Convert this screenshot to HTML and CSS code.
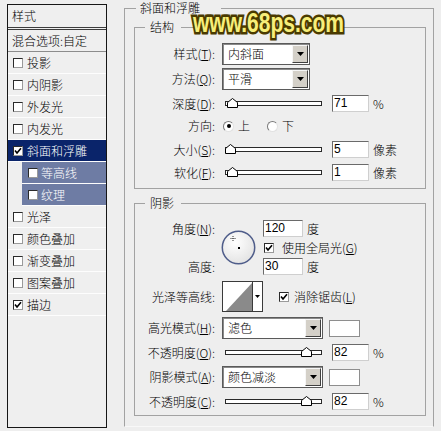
FILE: index.html
```html
<!DOCTYPE html>
<html lang="zh">
<head>
<meta charset="utf-8">
<title>图层样式 - 斜面和浮雕</title>
<link rel="stylesheet" href="styles.css">
</head>
<body>
<div class="dialog">
  <div class="styles-panel">
    <div class="panel-head">样式</div>
    <div class="panel-blend">混合选项:自定</div>
    <ul class="fx-list">
      <li class="fx"><span class="cb"></span>投影</li>
      <li class="fx"><span class="cb"></span>内阴影</li>
      <li class="fx"><span class="cb"></span>外发光</li>
      <li class="fx"><span class="cb"></span>内发光</li>
      <li class="fx selected"><span class="cb"><svg viewBox="0 0 8 8"><path d="M1 3.6 L3 6 L7 1.2" fill="none" stroke="#000" stroke-width="1.6"/></svg></span>斜面和浮雕</li>
      <li class="fx sub"><span class="cb"></span>等高线</li>
      <li class="fx sub"><span class="cb"></span>纹理</li>
      <li class="fx"><span class="cb"></span>光泽</li>
      <li class="fx"><span class="cb"></span>颜色叠加</li>
      <li class="fx"><span class="cb"></span>渐变叠加</li>
      <li class="fx"><span class="cb"></span>图案叠加</li>
      <li class="fx"><span class="cb"><svg viewBox="0 0 8 8"><path d="M1 3.6 L3 6 L7 1.2" fill="none" stroke="#000" stroke-width="1.6"/></svg></span>描边</li>
    </ul>
  </div>

  <fieldset class="group outer">
    <legend>斜面和浮雕</legend>

    <fieldset class="group inner structure">
      <legend>结构</legend>
      <div class="row">
        <span class="lbl">样式(<u>T</u>):</span>
        <div class="select sel-88"><span class="sel-text">内斜面</span><span class="sel-btn"><svg width="7" height="4" viewBox="0 0 7 4"><path d="M0 0 H7 L3.5 4 Z" fill="#000"/></svg></span></div>
      </div>
      <div class="row mt3">
        <span class="lbl">方法(<u>Q</u>):</span>
        <div class="select sel-88"><span class="sel-text">平滑</span><span class="sel-btn"><svg width="7" height="4" viewBox="0 0 7 4"><path d="M0 0 H7 L3.5 4 Z" fill="#000"/></svg></span></div>
      </div>
      <div class="row mt5">
        <span class="lbl">深度(<u>D</u>):</span>
        <div class="slider"><span class="track"></span><svg class="thumb" style="left:5px" viewBox="0 0 11 10"><path d="M0.5 9.5 V4.5 L5.5 0.5 L10.5 4.5 V9.5 Z" fill="#fff" stroke="#000"/></svg></div>
        <span class="num">71</span><span class="unit">%</span>
      </div>
      <div class="row mt5 h18">
        <span class="lbl">方向:</span>
        <span class="radio on"></span><span class="radio-text">上</span>
        <span class="radio r2"></span><span class="radio-text">下</span>
      </div>
      <div class="row mt6">
        <span class="lbl">大小(<u>S</u>):</span>
        <div class="slider"><span class="track"></span><svg class="thumb" style="left:3px" viewBox="0 0 11 10"><path d="M0.5 9.5 V4.5 L5.5 0.5 L10.5 4.5 V9.5 Z" fill="#fff" stroke="#000"/></svg></div>
        <span class="num">5</span><span class="unit">像素</span>
      </div>
      <div class="row mt6">
        <span class="lbl">软化(<u>F</u>):</span>
        <div class="slider"><span class="track"></span><svg class="thumb" style="left:5px" viewBox="0 0 11 10"><path d="M0.5 9.5 V4.5 L5.5 0.5 L10.5 4.5 V9.5 Z" fill="#fff" stroke="#000"/></svg></div>
        <span class="num">1</span><span class="unit">像素</span>
      </div>
    </fieldset>

    <fieldset class="group inner shading">
      <legend>阴影</legend>
      <div class="angle">
        <span class="glbl r1">角度(<u>N</u>):</span>
        <svg class="dial" width="35" height="35" viewBox="0 0 35 35">
          <defs>
            <radialGradient id="dg" cx="0.4" cy="0.35" r="0.7">
              <stop offset="0" stop-color="#ffffff"/>
              <stop offset="1" stop-color="#e2e2e2"/>
            </radialGradient>
          </defs>
          <circle cx="17.5" cy="17.5" r="16.2" fill="url(#dg)" stroke="#4f5d8a" stroke-width="1.5"/>
          <path d="M12 6 V11 M9.5 8.5 H14.5" stroke="#333" stroke-width="1" stroke-dasharray="1 1"/>
          <rect x="17" y="17" width="2" height="2" fill="#000"/>
        </svg>
        <div class="acell r1"><span class="num w40">120</span><span class="unit">度</span></div>
        <div class="acell r2"><span class="cb"><svg viewBox="0 0 8 8"><path d="M1 3.6 L3 6 L7 1.2" fill="none" stroke="#000" stroke-width="1.6"/></svg></span><span class="cb-text">使用全局光(<u>G</u>)</span></div>
        <span class="glbl r3">高度:</span>
        <div class="acell r3"><span class="num w40">30</span><span class="unit">度</span></div>
      </div>
      <div class="row mt6">
        <span class="lbl">光泽等高线:</span>
        <div class="contour">
          <svg class="curve" width="29" height="29" viewBox="0 0 29 29"><path d="M3 29 L29 1 V29 Z" fill="#8a8a8a"/></svg>
          <span class="contour-btn"><svg width="5" height="3" viewBox="0 0 5 3"><path d="M0 0 H5 L2.5 3 Z" fill="#000"/></svg></span>
        </div>
        <span class="cb cb-aa"><svg viewBox="0 0 8 8"><path d="M1 3.6 L3 6 L7 1.2" fill="none" stroke="#000" stroke-width="1.6"/></svg></span><span class="cb-text t5">消除锯齿(<u>L</u>)</span>
      </div>
      <div class="row mt5">
        <span class="lbl">高光模式(<u>H</u>):</span>
        <div class="select sel-101"><span class="sel-text">滤色</span><span class="sel-btn"><svg width="7" height="4" viewBox="0 0 7 4"><path d="M0 0 H7 L3.5 4 Z" fill="#000"/></svg></span></div>
        <span class="swatch"></span>
      </div>
      <div class="row mt5">
        <span class="lbl">不透明度(<u>O</u>):</span>
        <div class="slider"><span class="track"></span><svg class="thumb" style="left:79px" viewBox="0 0 11 10"><path d="M0.5 9.5 V4.5 L5.5 0.5 L10.5 4.5 V9.5 Z" fill="#fff" stroke="#000"/></svg></div>
        <span class="num">82</span><span class="unit">%</span>
      </div>
      <div class="row mt5">
        <span class="lbl">阴影模式(<u>A</u>):</span>
        <div class="select sel-101"><span class="sel-text">颜色减淡</span><span class="sel-btn"><svg width="7" height="4" viewBox="0 0 7 4"><path d="M0 0 H7 L3.5 4 Z" fill="#000"/></svg></span></div>
        <span class="swatch"></span>
      </div>
      <div class="row mt5">
        <span class="lbl">不透明度(<u>C</u>):</span>
        <div class="slider"><span class="track"></span><svg class="thumb" style="left:79px" viewBox="0 0 11 10"><path d="M0.5 9.5 V4.5 L5.5 0.5 L10.5 4.5 V9.5 Z" fill="#fff" stroke="#000"/></svg></div>
        <span class="num">82</span><span class="unit">%</span>
      </div>
    </fieldset>
  </fieldset>
</div>
<div class="watermark">www.68ps.com</div>
</body>
</html>
```

FILE: styles.css
```css
* { box-sizing: border-box; }
html, body { margin: 0; padding: 0; }
body {
  width: 441px;
  height: 431px;
  overflow: hidden;
  position: relative;
  background: #eeeeee;
  color: #000;
  font-family: "Noto Sans CJK SC", "Liberation Sans", sans-serif;
  font-weight: 300;
  font-size: 12px;
  line-height: 14px;
}

.dialog {
  display: flex;
  align-items: flex-start;
  padding: 1px 0 0 7px;
}

/* ---------- left style list ---------- */
.styles-panel {
  flex: none;
  width: 100px;
  height: 424px;
  margin-top: 3px;
  border: 1px solid #161616;
  background: #efefef;
}
.panel-head {
  height: 25px;
  border-bottom: 3px double #3c3c3c;
  padding-left: 4px;
  display: flex;
  align-items: center;
}
.panel-blend {
  height: 22px;
  border-bottom: 1px solid #8c8c8c;
  padding-left: 4px;
  display: flex;
  align-items: center;
}
.fx-list { list-style: none; margin: 0; padding: 0; }
.fx {
  height: 22px;
  border-bottom: 1px solid #fdfdfd;
  display: flex;
  align-items: center;
  gap: 4px;
  padding-left: 5px;
}
.fx.selected { background: #0a246a; color: #fff; }
.fx.sub {
  margin-left: 14px;
  padding-left: 6px;
  gap: 3px;
  background: #6e7ca4;
  color: #fff;
}

.cb {
  flex: none;
  width: 10px;
  height: 10px;
  background: #fff;
  border: 1px solid;
  border-color: #2a2a2a #9a9a9a #9a9a9a #2a2a2a;
  display: flex;
  align-items: center;
  justify-content: center;
}
.cb svg { display: block; width: 8px; height: 8px; }

/* ---------- group boxes ---------- */
.group {
  margin: 0;
  border: 1px solid #a2a2a2;
  min-width: 0;
}
.group > legend {
  padding: 0;
  height: 14px;
  line-height: 14px;
}
.outer {
  flex: none;
  margin-left: 17px;
  width: 310px;
  padding: 0 7px 10px 9px;
  border-bottom-color: #f8f8f8;
}
.outer > legend { margin-left: 2px; padding: 0 21px 0 4px; }
.inner { width: 292px; }
.inner > legend { margin-left: 10px; padding: 0 7px 0 5px; }
.structure { margin-top: 5px; padding: 9px 0 7px; }
.shading { margin-top: 7px; padding: 10px 0 5px; }

/* ---------- rows ---------- */
.row { display: flex; align-items: center; }
.mt3 { margin-top: 3px; }
.mt5 { margin-top: 5px; }
.mt6 { margin-top: 6px; }
.h18 { height: 18px; }
.lbl {
  flex: none;
  width: 80px;
  margin-right: 7px;
  text-align: right;
  white-space: nowrap;
}

.select {
  flex: none;
  display: flex;
  align-items: center;
  height: 22px;
  background: #fff;
  border: 1px solid #5a5a5a;
  box-shadow: inset 1px 1px 0 #8a8a8a;
  padding-left: 5px;
}
.sel-88 { width: 88px; }
.sel-101 { width: 101px; }
.sel-text { flex: 1; white-space: nowrap; }
.sel-btn {
  flex: none;
  width: 16px;
  height: 18px;
  margin-right: 1px;
  background: #d4d0c8;
  border: 1px solid;
  border-color: #f6f6f6 #404040 #404040 #f6f6f6;
  display: flex;
  align-items: center;
  justify-content: center;
}
.sel-btn svg { display: block; }

.slider {
  flex: none;
  position: relative;
  width: 100px;
  height: 17px;
  display: flex;
  align-items: center;
  padding-left: 3px;
}
.track {
  width: 97px;
  height: 5px;
  border: 1px solid #2a2a2a;
  background: #fff;
}
.thumb {
  position: absolute;
  top: 3px;
  width: 11px;
  height: 10px;
}

.num {
  flex: none;
  width: 37px;
  height: 17px;
  margin-left: 10px;
  background: #fff;
  border: 1px solid;
  border-color: #6a6a6a #cfcfcf #cfcfcf #6a6a6a;
  padding-left: 1px;
  font-family: "Liberation Sans", sans-serif;
  font-weight: 400;
  font-size: 12px;
  line-height: 15px;
}
.num.w40 { width: 40px; margin-left: 0; }
.unit { margin-left: 4px; white-space: nowrap; }

.radio {
  flex: none;
  width: 11px;
  height: 11px;
  margin-left: 1px;
  border-radius: 50%;
  background: #fff;
  border: 1px solid;
  border-color: #7a7a7a #e2e2e2 #e2e2e2 #7a7a7a;
  display: flex;
  align-items: center;
  justify-content: center;
}
.radio.on::after {
  content: "";
  width: 4px;
  height: 4px;
  border-radius: 50%;
  background: #000;
}
.radio.r2 { margin-left: 17px; }
.radio-text { margin-left: 4px; }

/* ---------- angle block ---------- */
.angle {
  display: grid;
  grid-template-columns: 86px 42px auto;
  grid-template-rows: 17px 19px 17px;
  row-gap: 1px;
}
.glbl {
  grid-column: 1;
  align-self: center;
  text-align: right;
  padding-right: 6px;
  white-space: nowrap;
}
.glbl.r1 { grid-row: 1; }
.glbl.r3 { grid-row: 3; }
.dial {
  grid-column: 2;
  grid-row: 1 / 4;
  align-self: center;
  display: block;
}
.acell {
  grid-column: 3;
  display: flex;
  align-items: center;
}
.acell.r1 { grid-row: 1; }
.acell.r2 { grid-row: 2; padding-left: 1px; }
.acell.r3 { grid-row: 3; }
.cb-text { margin-left: 8px; white-space: nowrap; }
.cb-text.t5 { margin-left: 5px; }

.contour {
  flex: none;
  display: flex;
  width: 41px;
  height: 31px;
  background: #fff;
  border: 1px solid #3a3a3a;
}
.curve { display: block; flex: none; }
.contour-btn {
  flex: none;
  width: 10px;
  border-left: 1px solid #3a3a3a;
  display: flex;
  align-items: center;
  justify-content: center;
}
.contour-btn svg { display: block; }
.cb-aa { margin-left: 16px; }

.swatch {
  flex: none;
  width: 31px;
  height: 17px;
  margin-left: 6px;
  background: #fff;
  border: 1px solid #8e8e8e;
}

/* ---------- watermark overlay ---------- */
.watermark {
  position: absolute;
  left: 193px;
  top: 9px;
  font-family: "Liberation Sans", sans-serif;
  font-weight: bold;
  font-size: 28px;
  line-height: 28px;
  white-space: nowrap;
  color: #f7ee7a;
  -webkit-text-stroke: 5px #4a3a00;
  paint-order: stroke fill;
  transform: scaleX(0.75);
  transform-origin: left top;
}
```
